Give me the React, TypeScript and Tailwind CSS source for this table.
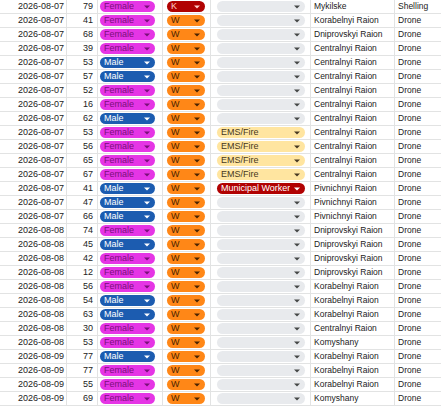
import React from "react";

type Row = [string, number, "F" | "M", "K" | "W", "" | "EMS" | "MUN", string, string];

const rows: Row[] = [
  ["2026-08-07", 79, "F", "K", "", "Mykilske", "Shelling"],
  ["2026-08-07", 41, "F", "W", "", "Korabelnyi Raion", "Drone"],
  ["2026-08-07", 68, "F", "W", "", "Dniprovskyi Raion", "Drone"],
  ["2026-08-07", 39, "F", "W", "", "Centralnyi Raion", "Drone"],
  ["2026-08-07", 53, "M", "W", "", "Centralnyi Raion", "Drone"],
  ["2026-08-07", 57, "M", "W", "", "Centralnyi Raion", "Drone"],
  ["2026-08-07", 52, "F", "W", "", "Centralnyi Raion", "Drone"],
  ["2026-08-07", 16, "F", "W", "", "Centralnyi Raion", "Drone"],
  ["2026-08-07", 62, "M", "W", "", "Centralnyi Raion", "Drone"],
  ["2026-08-07", 53, "F", "W", "EMS", "Centralnyi Raion", "Drone"],
  ["2026-08-07", 56, "F", "W", "EMS", "Centralnyi Raion", "Drone"],
  ["2026-08-07", 65, "F", "W", "EMS", "Centralnyi Raion", "Drone"],
  ["2026-08-07", 67, "F", "W", "EMS", "Centralnyi Raion", "Drone"],
  ["2026-08-07", 41, "M", "W", "MUN", "Pivnichnyi Raion", "Drone"],
  ["2026-08-07", 47, "M", "W", "", "Pivnichnyi Raion", "Drone"],
  ["2026-08-07", 66, "M", "W", "", "Pivnichnyi Raion", "Drone"],
  ["2026-08-08", 74, "F", "W", "", "Dniprovskyi Raion", "Drone"],
  ["2026-08-08", 45, "M", "W", "", "Dniprovskyi Raion", "Drone"],
  ["2026-08-08", 42, "F", "W", "", "Dniprovskyi Raion", "Drone"],
  ["2026-08-08", 12, "F", "W", "", "Dniprovskyi Raion", "Drone"],
  ["2026-08-08", 56, "F", "W", "", "Korabelnyi Raion", "Drone"],
  ["2026-08-08", 54, "M", "W", "", "Korabelnyi Raion", "Drone"],
  ["2026-08-08", 63, "M", "W", "", "Korabelnyi Raion", "Drone"],
  ["2026-08-08", 30, "F", "W", "", "Centralnyi Raion", "Drone"],
  ["2026-08-08", 53, "F", "W", "", "Komyshany", "Drone"],
  ["2026-08-09", 77, "M", "W", "", "Korabelnyi Raion", "Drone"],
  ["2026-08-09", 77, "F", "W", "", "Korabelnyi Raion", "Drone"],
  ["2026-08-09", 55, "F", "W", "", "Korabelnyi Raion", "Drone"],
  ["2026-08-09", 69, "F", "W", "", "Komyshany", "Drone"],
];

function Arrow({ color }: { color: string }) {
  return (
    <svg width="6" height="4" viewBox="0 0 6 4" className="shrink-0">
      <path d="M0 0.5 L6 0.5 L3 3.5 Z" fill={color} />
    </svg>
  );
}

function Chip({
  label,
  bg,
  fg,
  arrow,
  width,
}: {
  label: string;
  bg: string;
  fg: string;
  arrow: string;
  width: string;
}) {
  return (
    <div
      className={`${width} h-[11px] rounded-full flex items-center justify-between pl-[4px] pr-[5px] overflow-hidden ${bg}`}
    >
      <span className={`whitespace-nowrap overflow-hidden leading-none ${fg}`}>{label}</span>
      <Arrow color={arrow} />
    </div>
  );
}

export default function App() {
  return (
    <div
      className="w-[441px] h-[406px] overflow-hidden bg-white text-[#222] text-[9px]"
      style={{ fontFamily: '"Liberation Sans", Arial, sans-serif' }}
    >
      {rows.map((r, i) => (
        <div key={i} className="flex h-[14px] border-b border-[#e2e3e3] w-[441px]">
          <div className="w-[67px] shrink-0 border-r border-[#e2e3e3] flex items-center justify-end pr-[2px]">
            {r[0]}
          </div>
          <div className="w-[31px] shrink-0 border-r border-[#e2e3e3] flex items-center justify-end pr-[4px]">
            {r[1]}
          </div>
          <div className="w-[65px] shrink-0 border-r border-[#e2e3e3] flex items-center pl-[2px]">
            {r[2] === "F" ? (
              <Chip label="Female" bg="bg-[#e535e5]" fg="text-[#7a0f7a]" arrow="#7a0f7a" width="w-[55px]" />
            ) : (
              <Chip label="Male" bg="bg-[#1c5cb0]" fg="text-white" arrow="#ffffff" width="w-[55px]" />
            )}
          </div>
          <div className="w-[48px] shrink-0 border-r border-[#e2e3e3] flex items-center pl-[4px]">
            {r[3] === "K" ? (
              <Chip label="K" bg="bg-[#b10202]" fg="text-[#ffcfc9]" arrow="#ffcfc9" width="w-[38px]" />
            ) : (
              <Chip label="W" bg="bg-[#ff8717]" fg="text-[#4a2400]" arrow="#4a2400" width="w-[38px]" />
            )}
          </div>
          <div className="w-[100px] shrink-0 border-r border-[#e2e3e3] flex items-center pl-[6px]">
            {r[4] === "EMS" ? (
              <Chip label="EMS/Fire" bg="bg-[#ffe5a0]" fg="text-[#473821]" arrow="#473821" width="w-[88px]" />
            ) : r[4] === "MUN" ? (
              <Chip label="Municipal Worker" bg="bg-[#b10202]" fg="text-white" arrow="#ffffff" width="w-[88px]" />
            ) : (
              <Chip label="" bg="bg-[#e8eaed]" fg="text-[#444]" arrow="#444746" width="w-[88px]" />
            )}
          </div>
          <div className="w-[84px] shrink-0 border-r border-[#e2e3e3] flex items-center pl-[3px] whitespace-nowrap overflow-hidden text-[8.5px]">
            {r[5]}
          </div>
          <div className="flex-1 flex items-center pl-[3px] whitespace-nowrap overflow-hidden text-[8.5px]">{r[6]}</div>
        </div>
      ))}
    </div>
  );
}
